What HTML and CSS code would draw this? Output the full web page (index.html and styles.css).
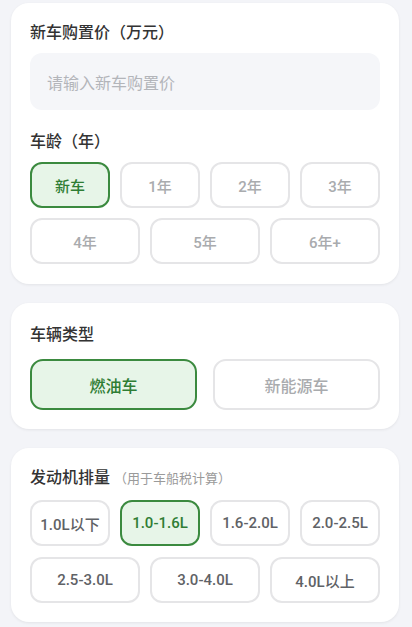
FILE: index.html
```html
<!DOCTYPE html>
<html lang="zh-CN">
<head>
<meta charset="utf-8">
<meta name="viewport" content="width=device-width, initial-scale=1">
<link rel="stylesheet" href="styles.css">
</head>
<body>
<main class="page">
  <section class="card card-price">
    <h2 class="label">新车购置价（万元）</h2>
    <div class="input">请输入新车购置价</div>
    <h2 class="label label-age">车龄（年）</h2>
    <div class="grid grid-4">
      <button class="opt selected">新车</button>
      <button class="opt light">1年</button>
      <button class="opt light">2年</button>
      <button class="opt light">3年</button>
    </div>
    <div class="grid grid-3">
      <button class="opt light">4年</button>
      <button class="opt light">5年</button>
      <button class="opt light">6年+</button>
    </div>
  </section>

  <section class="card card-type">
    <h2 class="label">车辆类型</h2>
    <div class="grid grid-2">
      <button class="opt big selected">燃油车</button>
      <button class="opt big light">新能源车</button>
    </div>
  </section>

  <section class="card card-engine">
    <h2 class="label">发动机排量<span class="hint">（用于车船税计算）</span></h2>
    <div class="grid grid-4">
      <button class="opt dark">1.0L以下</button>
      <button class="opt selected">1.0-1.6L</button>
      <button class="opt dark">1.6-2.0L</button>
      <button class="opt dark">2.0-2.5L</button>
    </div>
    <div class="grid grid-3 row2">
      <button class="opt dark">2.5-3.0L</button>
      <button class="opt dark">3.0-4.0L</button>
      <button class="opt dark">4.0L以上</button>
    </div>
  </section>
</main>
</body>
</html>
```
FILE: styles.css
```css
* { box-sizing: border-box; }
html, body { margin: 0; padding: 0; }
body {
  background: #f3f4f8;
  font-family: Roboto, "Noto Sans CJK SC", sans-serif;
  color: #333;
}
.page {
  display: flex;
  flex-direction: column;
  gap: 19px;
  padding: 3px 13px 20px 11px;
}
.card {
  background: #fff;
  border-radius: 18px;
  box-shadow: 0 1px 3px rgba(0, 0, 0, 0.07);
  padding: 19px 19px 20px 19px;
}
.card-type { padding: 21px 19px 19px; }
.card-engine { padding: 19px 19px 19px; }
.label {
  margin: 0;
  font-size: 16px;
  line-height: 22px;
  font-weight: 500;
  color: #333;
}
.hint {
  font-size: 13px;
  font-weight: 400;
  color: #9a9a9a;
  margin-left: 4px;
}
.input {
  margin-top: 9px;
  height: 57px;
  border-radius: 12px;
  background: #f5f6f9;
  color: #b3b5ba;
  font-size: 16px;
  display: flex;
  align-items: center;
  padding-left: 17px;
}
.label-age { margin-top: 21px; }
.grid {
  display: grid;
  gap: 10px;
  margin-top: 9px;
}
.card-engine .grid { margin-top: 10px; }
.card-engine .row2 { margin-top: 11px; }
.grid-4 { grid-template-columns: repeat(4, 1fr); }
.grid-3 { grid-template-columns: repeat(3, 1fr); margin-top: 10px; }
.grid-2 { grid-template-columns: repeat(2, 1fr); gap: 16px; margin-top: 13px; }
.opt {
  height: 46px;
  border: 2px solid #e5e5e7;
  border-radius: 12px;
  background: #fff;
  font-family: Roboto, "Noto Sans CJK SC", sans-serif;
  font-size: 15px;
  font-weight: 500;
  color: #a9abae;
  padding: 0;
}
.opt.big { height: 51px; font-size: 16px; border-radius: 13px; }
.opt.dark { color: #5f6266; }
.opt.selected {
  border-color: #3b8a3f;
  background: #e7f5e8;
  color: #2f7d34;
}
```
